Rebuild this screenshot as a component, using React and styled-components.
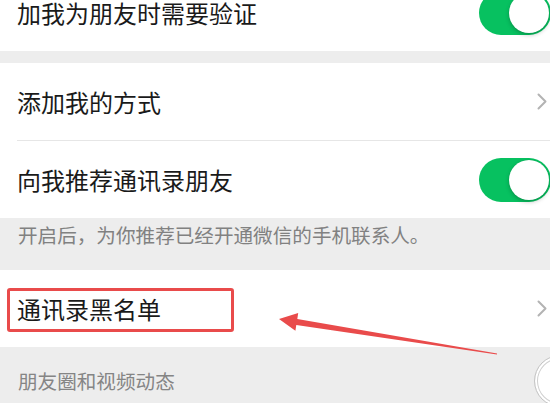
import React from 'react';
import styled, { createGlobalStyle } from 'styled-components';

const GlobalStyle = createGlobalStyle`
  html, body {
    margin: 0;
    padding: 0;
    background: #ededed;
  }
  body {
    font-family: "Noto Sans CJK SC", "Noto Sans", sans-serif;
  }
`;

const Chevron = () => (
  <ChevronIcon width="10" height="17" viewBox="0 0 10 17">
    <polyline
      points="1.5,1.5 8.5,8.5 1.5,15.5"
      fill="none"
      stroke="#b3b3b3"
      strokeWidth="2"
      strokeLinecap="round"
      strokeLinejoin="round"
    />
  </ChevronIcon>
);

const Switch = ({ on }) => (
  <Track $on={on}>
    <Knob $on={on} />
  </Track>
);

const App = () => {
  return (
    <Screen>
      <GlobalStyle />
      <Page>
        <Group>
          <Row>
            <Label>加我为朋友时需要验证</Label>
            <Switch on />
          </Row>
        </Group>
        <Gap />
        <Group>
          <Row>
            <Label>添加我的方式</Label>
            <Chevron />
          </Row>
          <Divider />
          <Row>
            <Label>向我推荐通讯录朋友</Label>
            <Switch on />
          </Row>
        </Group>
        <Note>开启后，为你推荐已经开通微信的手机联系人。</Note>
        <Group>
          <Row>
            <Label>通讯录黑名单</Label>
            <Chevron />
            <Highlight />
          </Row>
        </Group>
        <SectionHeader>
          <span>朋友圈和视频动态</span>
          <OffKnob />
        </SectionHeader>
      </Page>
      <Arrow viewBox="0 0 550 403" width="550" height="403">
        <polygon
          points="279,319 298.2,313 297.3,318.9 497.1,353.4 496.9,354.6 296.3,324.9 295.4,330.8"
          fill="#e94b4b"
        />
      </Arrow>
    </Screen>
  );
};

const Screen = styled.div`
  position: relative;
  width: 550px;
  height: 403px;
  overflow: hidden;
  background: #ededed;
`;

const Page = styled.div`
  margin-top: -26px;
  display: flex;
  flex-direction: column;
`;

const Group = styled.div`
  background: #ffffff;
  display: flex;
  flex-direction: column;
`;

const Row = styled.div`
  position: relative;
  height: 77px;
  display: flex;
  align-items: center;
  justify-content: space-between;
  padding-left: 17px;
`;

const Label = styled.span`
  font-size: 24px;
  line-height: 1;
  color: #1a1a1a;
`;

const Divider = styled.div`
  height: 1px;
  margin-left: 17px;
  background: #e6e6e6;
`;

const Gap = styled.div`
  height: 12px;
`;

const ChevronIcon = styled.svg`
  margin-right: 3px;
  flex-shrink: 0;
`;

const Track = styled.div`
  width: 72px;
  height: 44px;
  border-radius: 22px;
  margin-right: -1px;
  flex-shrink: 0;
  display: flex;
  align-items: center;
  justify-content: ${(p) => (p.$on ? 'flex-end' : 'flex-start')};
  padding: 0 2px;
  box-sizing: border-box;
  background: ${(p) => (p.$on ? '#07c160' : '#e5e5e5')};
`;

const Knob = styled.div`
  width: 40px;
  height: 40px;
  border-radius: 50%;
  background: #ffffff;
  box-shadow: 0 2px 4px rgba(0, 0, 0, 0.22), 0 0 1px rgba(0, 0, 0, 0.15);
`;

const Note = styled.div`
  height: 52px;
  box-sizing: border-box;
  padding: 3px 0 0 18px;
  font-size: 19.6px;
  line-height: 27px;
  color: #818181;
`;

const SectionHeader = styled.div`
  display: flex;
  align-items: flex-start;
  justify-content: space-between;
  min-height: 60px;
  padding-left: 18px;
  font-size: 19.6px;
  line-height: 27px;
  color: #858585;

  span {
    padding-top: 20px;
  }
`;

const OffKnob = styled.div`
  width: 50px;
  height: 50px;
  margin-top: 8px;
  margin-right: -36px;
  flex-shrink: 0;
  border-radius: 50%;
  background: #ffffff;
  border: 1px solid #c4c4c4;
  box-shadow: inset 0 0 0 2px #ffffff, inset 0 0 0 3px #cfcfcf;
`;

const Highlight = styled.div`
  position: absolute;
  left: 7px;
  top: 18px;
  width: 227px;
  height: 44px;
  box-sizing: border-box;
  border: 3px solid #e94b4b;
  border-radius: 3px;
  pointer-events: none;
`;

const Arrow = styled.svg`
  position: absolute;
  top: 0;
  left: 0;
  pointer-events: none;
`;

export default App;
